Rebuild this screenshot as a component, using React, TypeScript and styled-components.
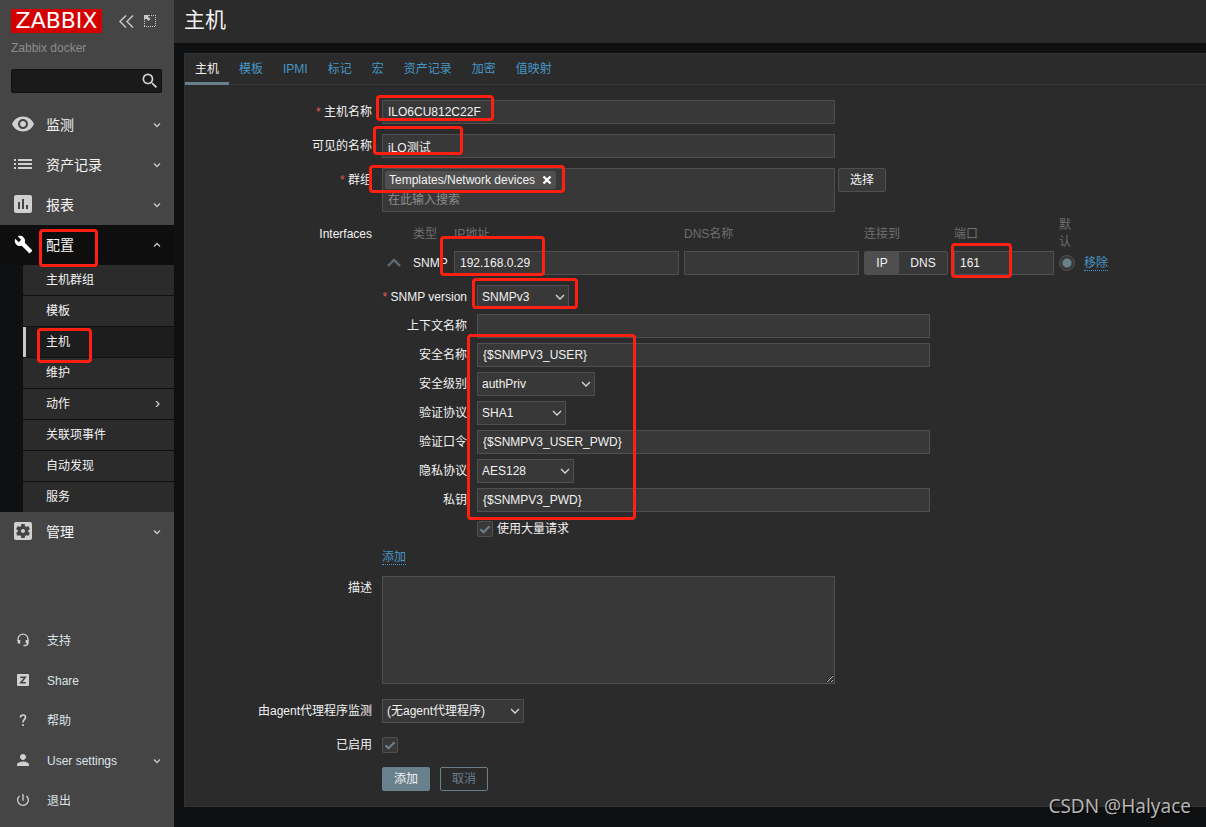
import React from "react";
import styled, { createGlobalStyle, css } from "styled-components";
import {
  MdRemoveRedEye,
  MdList,
  MdPoll,
  MdBuild,
  MdSettingsApplications,
  MdPerson,
  MdPowerSettingsNew,
  MdSearch,
} from "react-icons/md";

const GlobalStyle = createGlobalStyle`
  *, *::before, *::after { box-sizing: border-box; }
  body { margin: 0; background: #0e1012; }
  body, input, select, textarea, button {
    font-family: "Liberation Sans", "Noto Sans CJK SC", sans-serif;
    font-size: 12px;
    color: #f2f2f2;
  }
  a { text-decoration: none; }
`;

const Page = styled.div`
  position: relative;
  display: flex;
  min-height: 100vh;
  line-height: 18px;
`;

/* Sidebar */

const Sidebar = styled.aside`
  display: flex;
  flex-direction: column;
  flex: none;
  width: 174px;
  padding-bottom: 6px;
  background: #454545;
`;

const Brand = styled.div`
  display: flex;
  align-items: center;
  padding: 9px 0 0 11px;
`;

const Logo = styled.a`
  width: 91px;
  height: 24px;
  margin-right: 17px;
  background: #d40000;
  color: #fff;
  font: 22px/24px "DejaVu Sans", sans-serif;
  text-align: center;
`;

const IconButton = styled.button`
  display: flex;
  padding: 0;
  margin-right: 9px;
  border: 0;
  background: none;
  color: #c8c8c8;
`;

const ServerName = styled.div`
  padding: 6px 11px 0;
  color: #8c8c8c;
`;

const Search = styled.form`
  display: flex;
  align-items: center;
  height: 24px;
  margin: 12px 12px 12px 11px;
  border: 1px solid #0e1012;
  border-radius: 2px;
  background: #1a1a1a;
`;

const SearchInput = styled.input`
  flex: 1;
  min-width: 0;
  padding: 0 5px;
  border: 0;
  outline: 0;
  background: none;
`;

const SearchButton = styled(IconButton)`
  margin-right: 1px;
  color: #d4d4d4;
`;

const MenuLink = styled.a<{ $open?: boolean; $small?: boolean }>`
  display: flex;
  align-items: center;
  gap: ${(p) => (p.$small ? 1 : 0)}px;
  height: 40px;
  padding-right: 13px;
  color: ${(p) => (p.$small ? "#dce4e8" : "#f4f4f4")};
  font-size: ${(p) => (p.$small ? 12 : 14)}px;
  background: ${(p) => (p.$open ? "#0e0e0e" : "none")};
`;

const MenuIcon = styled.span<{ $bright?: boolean }>`
  display: flex;
  flex: none;
  justify-content: center;
  width: 46px;
  padding-bottom: 2px;
  color: ${(p) => (p.$bright ? "#fff" : "#d0d0d0")};
`;

const MenuText = styled.span`
  flex: 1;
`;

const SubMenu = styled.div`
  display: flex;
  flex-direction: column;
  gap: 1px;
  padding-left: 23px;
  background: #0e1012;
`;

const SubLink = styled.a<{ $active?: boolean }>`
  display: flex;
  align-items: center;
  height: 30px;
  padding: 0 13px 0 20px;
  border-left: 3px solid ${(p) => (p.$active ? "#c8c8c8" : "#2b2b2b")};
  background: ${(p) => (p.$active ? "#1d1d1d" : "#2b2b2b")};
  color: #f2f2f2;
`;

const UserMenu = styled.nav`
  margin-top: auto;
`;

/* Content */

const Main = styled.main`
  flex: 1;
  min-width: 0;
`;

const Header = styled.header`
  height: 43px;
  padding: 0 10px;
  background: #2b2b2b;
`;

const Title = styled.h1`
  margin: 0;
  font-size: 21px;
  font-weight: 400;
  line-height: 40px;
`;

const Panel = styled.section`
  margin: 10px 0 20px 10px;
  padding-bottom: 15px;
  border: 1px solid #303232;
  border-right: 0;
  background: #2b2b2b;
`;

const Tabs = styled.nav`
  display: flex;
  height: 31px;
  border-bottom: 1px solid #383838;
`;

const Tab = styled.a<{ $active?: boolean }>`
  height: 31px;
  padding: 0 10px;
  line-height: 30px;
  color: #4796c4;
  ${(p) =>
    p.$active &&
    css`
      color: #f2f2f2;
      border-bottom: 3px solid #69808d;
    `}
`;

const FormGrid = styled.form`
  display: grid;
  grid-template-columns: 187px minmax(0, 1fr);
  gap: 10px;
  padding-top: 15px;
`;

const Label = styled.label<{ $required?: boolean }>`
  line-height: 24px;
  text-align: right;
  white-space: nowrap;
  ${(p) =>
    p.$required &&
    css`
      &::before {
        content: "* ";
        color: #e45959;
      }
    `}
`;

const Field = styled.div`
  grid-column: 2;
  display: flex;
  align-items: flex-start;
  gap: 3px;
`;

const control = css`
  border: 1px solid #4f4f4f;
  background: #383838;
`;

const TextInput = styled.input<{ $width: number }>`
  ${control}
  display: block;
  width: ${(p) => p.$width}px;
  height: 24px;
  padding: 0 5px;
  line-height: 22px;
`;

const TextArea = styled.textarea`
  ${control}
  display: block;
  width: 453px;
  height: 108px;
  margin-bottom: 5px;
  padding: 4px 5px;
`;

const MultiSelect = styled.div`
  ${control}
  width: 453px;
  height: 44px;
  padding: 2px;
`;

const Chip = styled.span`
  display: flex;
  align-items: center;
  gap: 7px;
  width: max-content;
  height: 18px;
  padding: 0 4px;
  border-radius: 2px;
  background: #4f4f4f;
`;

const ChipRemove = styled(IconButton)`
  margin: 0;
  color: #fff;
`;

const ChipInput = styled.input`
  display: block;
  width: 100%;
  height: 21px;
  padding: 0 3px;
  border: 0;
  outline: 0;
  background: none;
  &::placeholder {
    color: #8c8c8c;
  }
`;

const Button = styled.button<{ $kind?: "primary" | "outline" }>`
  height: 24px;
  padding: 0 11px;
  border: 1px solid #4f4f4f;
  border-radius: 2px;
  background: #383838;
  line-height: 22px;
  ${(p) =>
    p.$kind === "primary" &&
    css`
      border-color: #69808d;
      background: #69808d;
    `}
  ${(p) =>
    p.$kind === "outline" &&
    css`
      border-color: #69808d;
      background: none;
      color: #69808d;
    `}
`;

const ButtonRow = styled(Field)`
  gap: 10px;
`;

const SelectBox = styled.span<{ $width: number }>`
  position: relative;
  display: block;
  width: ${(p) => p.$width}px;
  height: 24px;
  svg {
    position: absolute;
    top: 9px;
    right: 4px;
    pointer-events: none;
  }
`;

const NativeSelect = styled.select`
  ${control}
  appearance: none;
  width: 100%;
  height: 24px;
  padding: 0 16px 0 4px;
`;

const CheckLine = styled.label`
  display: flex;
  align-items: center;
  gap: 4px;
  height: 24px;
`;

const CheckBox = styled.span`
  display: grid;
  width: 16px;
  height: 16px;
  input,
  svg {
    grid-area: 1 / 1;
    margin: 0;
  }
  input {
    ${control}
    appearance: none;
    width: 16px;
    height: 16px;
    border-radius: 2px;
  }
  svg {
    z-index: 1;
    pointer-events: none;
  }
`;

const Radio = styled.input`
  appearance: none;
  display: block;
  width: 16px;
  height: 16px;
  margin: 0;
  border: 1px solid #4f4f4f;
  border-radius: 50%;
  background: radial-gradient(circle, #69808d 4px, #383838 5px);
`;

const ActionLink = styled.a`
  line-height: 16px;
  border-bottom: 1px dotted #4796c4;
  color: #4796c4;
`;

const Interfaces = styled.div`
  grid-column: 2;
  margin-top: -5px;
`;

const InterfaceTable = styled.table`
  border-collapse: collapse;
  table-layout: fixed;
  width: 760px;
  th {
    height: 34px;
    padding: 0;
    color: #6e6e6e;
    font-weight: 400;
    line-height: 17px;
    text-align: left;
  }
  td {
    height: 24px;
    padding: 0;
    white-space: nowrap;
  }
`;

const Col = styled.col<{ $width?: number }>`
  width: ${(p) => (p.$width ? `${p.$width}px` : "auto")};
`;

const NarrowText = styled.div`
  width: 16px;
`;

const InterfacesLabel = styled.span`
  line-height: 24px;
  text-align: right;
`;

const Segments = styled.div`
  display: flex;
  width: 84px;
  border: 1px solid #4f4f4f;
  border-radius: 2px;
  background: #383838;
`;

const Segment = styled.label`
  position: relative;
  flex: 1 0 auto;
  padding: 0 11px;
  line-height: 22px;
  text-align: center;
  &:has(input:checked) {
    background: #4f4f4f;
  }
  input {
    position: absolute;
    opacity: 0;
    margin: 0;
  }
`;

const Details = styled.div`
  display: grid;
  grid-template-columns: 85px 453px;
  gap: 5px 10px;
  margin: 10px 0 7px;
`;

const DetailField = styled.div`
  grid-column: 2;
`;

/* Red highlight frames laid over the screen */

const Highlight = styled.div<{ $x: number; $y: number; $w: number; $h: number }>`
  position: absolute;
  left: ${(p) => p.$x}px;
  top: ${(p) => p.$y}px;
  width: ${(p) => p.$w}px;
  height: ${(p) => p.$h}px;
  border: 3px solid #ff2012;
  border-radius: 4px;
  pointer-events: none;
`;

const Watermark = styled.div`
  position: absolute;
  right: 15px;
  bottom: 9px;
  color: #b4b4b4;
  font: 19px/24px "Noto Sans", sans-serif;
  text-shadow: 1px 1px 1px #000;
`;

const paths = {
  down: "M1 1.500l3 3 3-3",
  up: "M1 4.500l3-3 3 3",
  right: "M3 0l3 3-3 3",
};

const Arrow = ({ dir }: { dir: keyof typeof paths }) => (
  <svg width="8" height="6" viewBox="0 0 8 6" fill="none" stroke="#c8c8c8" strokeWidth="1.3">
    <path d={paths[dir]} />
  </svg>
);

const Tick = () => (
  <svg width="16" height="16" viewBox="0 0 16 16" fill="none" stroke="#69808d" strokeWidth="2.2">
    <path d="M3.500 8.200l3 3 6-6" />
  </svg>
);

const HeadsetIcon = () => (
  <svg width="14" height="14" viewBox="0 0 14 14" fill="none" stroke="currentColor">
    <path d="M2 8V6.200a5 5 0 0 1 10 0V10q0 2.300-2.500 2.500H7.500" strokeWidth="1.300" />
    <path d="M3 7v3.600M11 7v3.600" strokeWidth="2.600" />
  </svg>
);

const ShareIcon = () => (
  <svg width="12" height="12" viewBox="0 0 12 12">
    <rect width="12" height="12" rx="1" fill="currentColor" />
    <path d="M3.300 3.200h5L3.800 8.800h5" fill="none" stroke="#454545" strokeWidth="1.600" />
  </svg>
);

const HelpIcon = () => (
  <svg width="12" height="14" viewBox="0 0 12 14" fill="none" stroke="currentColor" strokeWidth="1.700">
    <path d="M3.500 4.500Q3.500 2 6 2t2.500 2.300C8.500 6.500 6 6.500 6 9.500M6 11.300V13" />
  </svg>
);

const Choice = ({ id, width, value }: { id: string; width: number; value: string }) => (
  <SelectBox $width={width}>
    <NativeSelect id={id} defaultValue={value}>
      <option>{value}</option>
    </NativeSelect>
    <svg width="10" height="7" viewBox="0 0 10 7" fill="none" stroke="#d8d8d8" strokeWidth="1.300">
      <path d="M1 1l4 4 4-4" />
    </svg>
  </SelectBox>
);

const mainMenu = [
  { text: "监测", icon: <MdRemoveRedEye size={24} /> },
  { text: "资产记录", icon: <MdList size={24} /> },
  { text: "报表", icon: <MdPoll size={24} /> },
];

const subMenu = ["主机群组", "模板", "主机", "维护", "动作", "关联项事件", "自动发现", "服务"];

const userMenu = [
  { text: "支持", icon: <HeadsetIcon /> },
  { text: "Share", icon: <ShareIcon /> },
  { text: "帮助", icon: <HelpIcon /> },
  { text: "User settings", icon: <MdPerson size={18} />, arrow: true },
  { text: "退出", icon: <MdPowerSettingsNew size={16} /> },
];

const tabs = ["主机", "模板", "IPMI", "标记", "宏", "资产记录", "加密", "值映射"];

const details = [
  { id: "version", label: "SNMP version", value: "SNMPv3", select: 92, required: true },
  { id: "context", label: "上下文名称", value: "" },
  { id: "secname", label: "安全名称", value: "{$SNMPV3_USER}" },
  { id: "seclevel", label: "安全级别", value: "authPriv", select: 118 },
  { id: "authproto", label: "验证协议", value: "SHA1", select: 89 },
  { id: "authpass", label: "验证口令", value: "{$SNMPV3_USER_PWD}" },
  { id: "privproto", label: "隐私协议", value: "AES128", select: 97 },
  { id: "privpass", label: "私钥", value: "{$SNMPV3_PWD}" },
];

const highlights = [
  [39, 229, 59, 38],
  [37, 328, 55, 35],
  [376, 95, 118, 26],
  [373, 126, 90, 29],
  [369, 165, 196, 28],
  [440, 236, 105, 40],
  [951, 243, 61, 35],
  [472, 278, 106, 31],
  [467, 334, 169, 186],
];

export default function App() {
  return (
    <Page>
      <GlobalStyle />
      <Sidebar>
        <Brand>
          <Logo href="#">ZABBIX</Logo>
          <IconButton aria-label="Collapse sidebar">
            <svg width="15" height="13" viewBox="0 0 15 13" fill="none" stroke="currentColor" strokeWidth="1.500">
              <path d="M7 .5l-6 6 6 6M14 .5l-6 6 6 6" />
            </svg>
          </IconButton>
          <IconButton aria-label="Hide sidebar">
            <svg width="14" height="14" viewBox="0 0 14 14" fill="none" stroke="currentColor">
              <path d="M6 1.500h7M12.500 3v10M1.500 7v6M1 12.500h11" strokeDasharray="1 1" />
              <path d="M1 1h5.500L5 2.500 7.500 5 5.500 7 3 4.500 1 6.500z" fill="currentColor" stroke="none" />
            </svg>
          </IconButton>
        </Brand>
        <ServerName>Zabbix docker</ServerName>
        <Search>
          <SearchInput aria-label="Search" />
          <SearchButton aria-label="Search">
            <MdSearch size={20} />
          </SearchButton>
        </Search>
        <nav>
          {mainMenu.map((m) => (
            <MenuLink href="#" key={m.text}>
              <MenuIcon>{m.icon}</MenuIcon>
              <MenuText>{m.text}</MenuText>
              <Arrow dir="down" />
            </MenuLink>
          ))}
          <MenuLink href="#" $open>
            <MenuIcon $bright>
              <MdBuild size={19} />
            </MenuIcon>
            <MenuText>配置</MenuText>
            <Arrow dir="up" />
          </MenuLink>
          <SubMenu>
            {subMenu.map((text) => (
              <SubLink href="#" key={text} $active={text === "主机"}>
                <MenuText>{text}</MenuText>
                {text === "动作" && <Arrow dir="right" />}
              </SubLink>
            ))}
          </SubMenu>
          <MenuLink href="#">
            <MenuIcon>
              <MdSettingsApplications size={24} />
            </MenuIcon>
            <MenuText>管理</MenuText>
            <Arrow dir="down" />
          </MenuLink>
        </nav>
        <UserMenu>
          {userMenu.map((m) => (
            <MenuLink href="#" key={m.text} $small>
              <MenuIcon>{m.icon}</MenuIcon>
              <MenuText>{m.text}</MenuText>
              {m.arrow && <Arrow dir="down" />}
            </MenuLink>
          ))}
        </UserMenu>
      </Sidebar>

      <Main>
        <Header>
          <Title>主机</Title>
        </Header>
        <Panel>
          <Tabs>
            {tabs.map((text, i) => (
              <Tab href="#" key={text} $active={i === 0}>
                {text}
              </Tab>
            ))}
          </Tabs>
          <FormGrid>
            <Label htmlFor="host" $required>主机名称</Label>
            <Field>
              <TextInput id="host" $width={453} defaultValue="ILO6CU812C22F" />
            </Field>

            <Label htmlFor="visible">可见的名称</Label>
            <Field>
              <TextInput id="visible" $width={453} defaultValue="iLO测试" />
            </Field>

            <Label htmlFor="groups" $required>群组</Label>
            <Field>
              <MultiSelect>
                <Chip>
                  Templates/Network devices
                  <ChipRemove type="button" aria-label="Remove">
                    <svg width="10" height="10" viewBox="0 0 10 10" stroke="currentColor" strokeWidth="2.400">
                      <path d="M1.500 1.500l7 7M8.500 1.500l-7 7" />
                    </svg>
                  </ChipRemove>
                </Chip>
                <ChipInput id="groups" placeholder="在此输入搜索" />
              </MultiSelect>
              <Button type="button">选择</Button>
            </Field>

            <InterfacesLabel>Interfaces</InterfacesLabel>
            <Interfaces>
              <InterfaceTable>
                <colgroup>
                  <Col $width={31} />
                  <Col $width={41} />
                  <Col $width={230} />
                  <Col $width={180} />
                  <Col $width={90} />
                  <Col $width={105} />
                  <Col $width={25} />
                  <Col />
                </colgroup>
                <thead>
                  <tr>
                    <th />
                    <th>类型</th>
                    <th>IP地址</th>
                    <th>DNS名称</th>
                    <th>连接到</th>
                    <th>端口</th>
                    <th>
                      <NarrowText>默认</NarrowText>
                    </th>
                    <th />
                  </tr>
                </thead>
                <tbody>
                  <tr>
                    <td>
                      <IconButton type="button" aria-label="Collapse interface">
                        <svg width="24" height="12" viewBox="0 0 24 12" fill="none" stroke="#5f6a70" strokeWidth="2.400">
                          <path d="M6 9l6-6 6 6" />
                        </svg>
                      </IconButton>
                    </td>
                    <td>SNMP</td>
                    <td>
                      <TextInput aria-label="IP地址" $width={225} defaultValue="192.168.0.29" />
                    </td>
                    <td>
                      <TextInput aria-label="DNS名称" $width={175} />
                    </td>
                    <td>
                      <Segments>
                        <Segment>
                          <input type="radio" name="connect" defaultChecked />
                          IP
                        </Segment>
                        <Segment>
                          <input type="radio" name="connect" />
                          DNS
                        </Segment>
                      </Segments>
                    </td>
                    <td>
                      <TextInput aria-label="端口" $width={100} defaultValue="161" />
                    </td>
                    <td>
                      <Radio type="radio" name="default" aria-label="默认" defaultChecked />
                    </td>
                    <td>
                      <ActionLink href="#">移除</ActionLink>
                    </td>
                  </tr>
                </tbody>
              </InterfaceTable>
              <Details>
                {details.map((d) => (
                  <React.Fragment key={d.id}>
                    <Label htmlFor={d.id} $required={d.required}>
                      {d.label}
                    </Label>
                    {d.select ? (
                      <Choice id={d.id} width={d.select} value={d.value} />
                    ) : (
                      <TextInput id={d.id} $width={453} defaultValue={d.value} />
                    )}
                  </React.Fragment>
                ))}
                <DetailField>
                  <CheckLine>
                    <CheckBox>
                      <input type="checkbox" defaultChecked />
                      <Tick />
                    </CheckBox>
                    使用大量请求
                  </CheckLine>
                </DetailField>
              </Details>
              <ActionLink href="#">添加</ActionLink>
            </Interfaces>

            <Label htmlFor="description">描述</Label>
            <Field>
              <TextArea id="description" />
            </Field>

            <Label htmlFor="proxy">由agent代理程序监测</Label>
            <Field>
              <Choice id="proxy" width={142} value="(无agent代理程序)" />
            </Field>

            <Label htmlFor="enabled">已启用</Label>
            <Field>
              <CheckLine>
                <CheckBox>
                  <input id="enabled" type="checkbox" defaultChecked />
                  <Tick />
                </CheckBox>
              </CheckLine>
            </Field>

            <ButtonRow>
              <Button type="button" $kind="primary">添加</Button>
              <Button type="button" $kind="outline">取消</Button>
            </ButtonRow>
          </FormGrid>
        </Panel>
      </Main>

      {highlights.map(([x, y, w, h]) => (
        <Highlight key={`${x}-${y}`} $x={x} $y={y} $w={w} $h={h} />
      ))}
      <Watermark>CSDN @Halyace</Watermark>
    </Page>
  );
}
